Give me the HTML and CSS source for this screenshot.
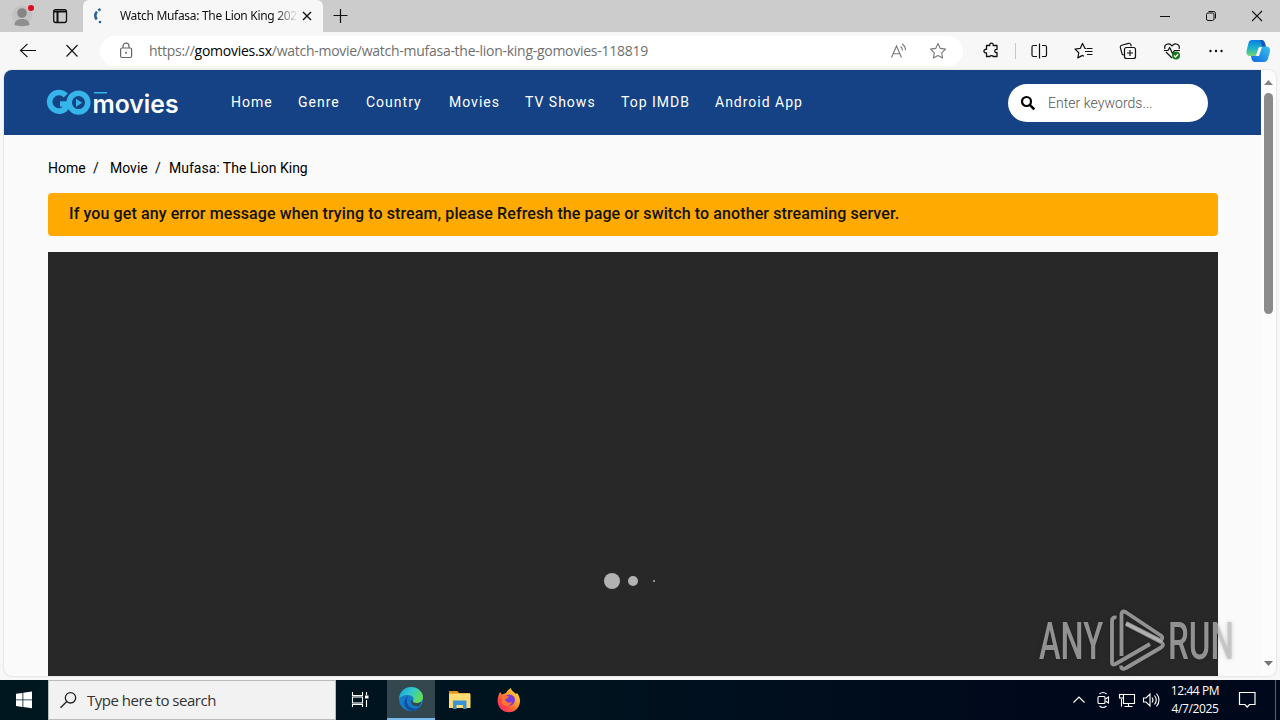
FILE: index.html
```html
<!DOCTYPE html>
<html lang="en">
<head>
<meta charset="utf-8">
<title>Watch Mufasa: The Lion King</title>
<link rel="stylesheet" href="styles.css">
</head>
<body>
<div class="screen">
  <div class="tabstrip">
    <svg class="profile" width="44" height="32" viewBox="0 0 44 32"><circle cx="22" cy="15.500" r="10" fill="#c2c2c2"/><circle cx="22" cy="13" r="4.800" fill="#858585"/><path d="M14.500 25c0-4 3-6 7.500-6s7.500 2 7.500 6c-4 1.500-11 1.500-15 0z" fill="#8f8f8f"/><circle cx="31" cy="8" r="3" fill="#e00b1c"/></svg>
    <svg class="workspaces" width="32" height="32" viewBox="0 0 32 32" fill="none" stroke="#111" stroke-width="1.300"><rect x="9.700" y="9.700" width="12.800" height="12.800" rx="2"/><path d="M9.700 11.500h12.800M13.500 12v10.500" stroke-width="2"/></svg>
    <div class="tab">
      <svg width="16" height="18" viewBox="0 0 16 18" fill="none" stroke="#2a659b"><path d="M8.500 2.200L6.300 3.300M5 4.600C2.700 7 3 10 4.700 12.500" stroke-width="2.600"/><circle cx="8" cy="15" r="1.300" fill="#2a659b" stroke="none"/></svg>
      <span class="tab-title">Watch Mufasa: The Lion King 202</span>
      <svg class="tab-close" width="16" height="16" viewBox="0 0 16 16" stroke="#111" stroke-width="1.400"><path d="M4 4l8 8M12 4l-8 8"/></svg>
    </div>
    <svg width="34" height="32" viewBox="0 0 34 32" stroke="#111" stroke-width="1.200"><path d="M17.500 9v14M10.500 15.500h14"/></svg>
    <div class="window-buttons">
      <svg width="46" height="32" viewBox="0 0 46 32" stroke="#111"><path d="M18 16.500h10"/></svg>
      <svg width="46" height="32" viewBox="0 0 46 32" stroke="#111" fill="none"><rect x="18.500" y="13" width="7.500" height="7.500" rx="1.500"/><path d="M20.500 11.500h5a2 2 0 0 1 2 2v5"/></svg>
      <svg width="46" height="32" viewBox="0 0 46 32" stroke="#111" stroke-width="1.100"><path d="M18 11l10 10M28 11L18 21"/></svg>
    </div>
  </div>

  <div class="toolbar">
    <svg class="tool" viewBox="0 0 44 38" fill="none" stroke="#111" stroke-width="1.100"><path d="M30 18.500H14.500M21.500 11.800l-7 6.700 7 6.700"/></svg>
    <svg class="tool" viewBox="0 0 44 38" stroke="#111" stroke-width="1.100"><path d="M16.500 13l11 11.500M27.500 13l-11 11.500"/></svg>
    <div class="address">
      <svg width="16" height="18" viewBox="0 0 16 18" fill="none" stroke="#666" stroke-width="1.200"><rect x="2.600" y="6" width="11" height="9.500" rx="1.500"/><path d="M5 6V4.200a3 3 0 0 1 6 0V6"/><circle cx="8" cy="10.800" r="1" fill="#666" stroke="none"/></svg>
      <span class="url">https://<b>gomovies.sx</b>/watch-movie/watch-mufasa-the-lion-king-gomovies-118819</span>
      <svg class="read" width="18" height="18" viewBox="0 0 18 18" fill="none" stroke="#777" stroke-width="1.100"><path d="M1.500 15.500L6.500 4l5 11.500M3.200 11.800h6.700M10.500 4.500q2 1.500 2 4M12 1.800q3.500 2.500 3.500 6.500"/></svg>
      <svg width="18" height="18" viewBox="0 0 18 18" fill="none" stroke="#777" stroke-width="1.100" stroke-linejoin="round"><path d="M9 1.600l2.300 4.800 5.200.7-3.800 3.700.9 5.200L9 13.500 4.400 16l.9-5.200L1.500 7.100l5.200-.7z"/></svg>
    </div>
    <svg class="tool extensions" viewBox="0 0 44 38" fill="none" stroke="#111" stroke-width="1.300" stroke-linejoin="round"><path d="M17.500 13.500h3.300c-.6-3.200 4-3.200 3.400 0h3.800v4c-3-.6-3 3.600 0 3v4h-4c.4-1.200-3.400-1.200-3 0h-3.500v-3.600c-3.400.5-3.400-4 0-3.600z"/></svg>
    <span class="divider"></span>
    <svg class="tool" viewBox="0 0 44 38" fill="none" stroke="#111" stroke-width="1.200"><path d="M20 13.500h-3.500a1.500 1.500 0 0 0-1.500 1.500v8a1.500 1.500 0 0 0 1.500 1.500H20M25 13.500h3a1.500 1.500 0 0 1 1.500 1.500v8a1.500 1.500 0 0 1-1.500 1.500h-3M22.500 11.500v15"/></svg>
    <svg class="tool favorites" viewBox="0 0 44 38" fill="none" stroke="#111" stroke-width="1.200" stroke-linejoin="round"><path d="M24.500 16.500l-1.600-.2-2.400-4.800-2.300 4.900-5.200.6 3.800 3.700-1 5.200 4.700-2.500 1.500.9M25 16.500h5.500M23 19.500h7.500M25 22.500h5.500"/></svg>
    <svg class="tool" viewBox="0 0 44 38" fill="none" stroke="#111" stroke-width="1.200"><rect x="18.500" y="15.500" width="11" height="11" rx="2"/><path d="M24 18v6M21 21h6M18 23l-1.700-.4-2-7.200a2 2 0 0 1 1.300-2.200l7-1.900a2 2 0 0 1 2.200 1.400l.5 1.700"/></svg>
    <svg class="tool" viewBox="0 0 44 38" fill="none" stroke="#111" stroke-width="1.200" stroke-linejoin="round"><path d="M15 17c-1.500-4.500 4-7 7-3 3-4 8.500-1.500 7 3M16 20l6 6M14 18.500h4l1.700-3 2.800 6 2-3h5.500"/><circle cx="26" cy="23.500" r="4" fill="#16791b" stroke="none"/><path d="M24 23.500l1.500 1.500 2.700-3" stroke="#fff"/></svg>
    <svg class="tool" viewBox="0 0 44 38" fill="#111"><circle cx="16.500" cy="19" r="1.200"/><circle cx="22" cy="19" r="1.200"/><circle cx="27.500" cy="19" r="1.200"/></svg>
    <svg class="copilot" width="40" height="38" viewBox="0 0 40 38"><defs><linearGradient id="cp1" x1="0" y1="0" x2="0" y2="1"><stop offset="0" stop-color="#087fe3"/><stop offset=".55" stop-color="#20b7c7"/><stop offset="1" stop-color="#77d66e"/></linearGradient><linearGradient id="cp2" x1="1" y1="0" x2="0" y2="1"><stop offset="0" stop-color="#39c4ee"/><stop offset="1" stop-color="#1067df"/></linearGradient></defs><path d="M14 8h9c2 0 3 1.500 3.500 3.500l1 3.500h-4c-2 0-3 1-3.500 3l-1.500 4c-.5 1.500-1.500 2-3 2h-3c-3 0-4.500-2-4-5l2-8c.5-2 1.500-3 3.500-3z" fill="url(#cp1)"/><path d="M26 30h-9c-2 0-3-1.500-3.500-3.500L13 24h3c2 0 3-1 3.500-2.500l1.500-4c.5-1.500 1.500-3 3-3h4c3 0 4.500 2 4 5l-2 7c-.5 2-2 3.500-4 3.500z" fill="url(#cp2)"/><path d="M22 8h2c1.500 0 2.500 1.500 3 3l1 3.500h-4z" fill="#1659b8"/><path d="M21 15h3l-3 9h-3z" fill="#f7f7f7"/></svg>
  </div>

  <div class="page">
    <div class="content">
      <header class="site-header">
        <svg class="logo" width="140" height="32" viewBox="0 0 140 32"><g fill="none" stroke="#35b5e9" stroke-width="5.600"><path d="M17.800 7.500A9.300 9.300 0 1 0 19 18.500V16h-7"/><circle cx="30.500" cy="14.600" r="9.300"/></g><path d="M28 10.700v8l6.200-4z" fill="#35b5e9"/><path d="M46 4.700h13" stroke="#35b5e9" stroke-width="1.600"/><text class="logo-text" x="44.500" y="25.300" textLength="86" lengthAdjust="spacingAndGlyphs">movies</text></svg>
        <nav class="nav"><a>Home</a><a>Genre</a><a>Country</a><a>Movies</a><a>TV Shows</a><a>Top IMDB</a><a>Android App</a></nav>
        <div class="search">
          <svg width="16" height="16" viewBox="0 0 16 16" fill="none" stroke="#000" stroke-width="2.200"><circle cx="6.500" cy="6.500" r="4.500"/><path d="M9.800 9.800l4.500 4.500" stroke-width="2.600"/></svg>
          <span>Enter keywords...</span>
        </div>
      </header>
      <div class="crumbs"><span class="c1">Home</span><span class="c2">/</span><span class="c3">Movie</span><span class="c4">/</span><span class="c5">Mufasa: The Lion King</span></div>
      <div class="alert">If you get any error message when trying to stream, please Refresh the page or switch to another streaming server.</div>
      <div class="player"><svg width="60" height="20" viewBox="0 0 60 20" fill="#b2b2b2"><circle cx="10" cy="10" r="8"/><circle cx="31" cy="10" r="5"/><circle cx="52" cy="10" r="1"/></svg></div>
    </div>
    <div class="scrollbar">
      <svg width="15" height="23" viewBox="0 0 15 23"><path d="M3 15l4.500-5 4.500 5z" fill="#858585"/></svg>
      <span class="thumb"></span>
      <svg class="down" width="15" height="23" viewBox="0 0 15 23"><path d="M3 8l4.500 5L12 8z" fill="#757575"/></svg>
    </div>
  </div>

  <div class="taskbar">
    <svg width="48" height="40" viewBox="0 0 48 40" fill="#fff"><path d="M16 13.800l6.500-.9v6.600H16zM23.300 12.800l8.700-1.200v7.900h-8.700zM16 20.300h6.500v6.600l-6.500-.9zM23.300 20.300H32v7.900l-8.700-1.200z"/></svg>
    <div class="task-search">
      <svg width="18" height="18" viewBox="0 0 18 18" fill="none" stroke="#222" stroke-width="1.300"><circle cx="10.500" cy="6.800" r="5.200"/><path d="M6.800 10.500L.5 16.800"/></svg>
      <span>Type here to search</span>
    </div>
    <svg width="51" height="40" viewBox="0 0 51 40" fill="none" stroke="#fff" stroke-width="1.100"><path d="M16.500 12v3.500h10V12M16.500 27v-2.500h10V27M30.500 12v3M30.500 20v7"/><rect x="16.500" y="17" width="10" height="6"/><path d="M29 15.500h3.500v3H29z" fill="#fff" stroke="none"/></svg>
    <div class="task-edge">
      <svg width="26" height="26" viewBox="0 0 26 26"><defs><linearGradient id="eg" x1="0" y1="0" x2="1" y2=".5"><stop offset="0" stop-color="#159fd5"/><stop offset=".5" stop-color="#31c6cf"/><stop offset="1" stop-color="#64dc58"/></linearGradient></defs><circle cx="13" cy="13" r="12" fill="#147bcb"/><path d="M1 13C2 5 7 1 13 1c7 0 12 5 12 10 0 4-3 6-6.500 6-3 0-4-1-3.500-2 2-3-1-6-5-6-5 0-8 2-9 4z" fill="url(#eg)"/><path d="M9 13c-1.500 6 4 10 9 9.500 2-.2 3.500-1 4.500-2C20 24.500 15 26 11 24 6 22 4 14 10 10z" fill="#124f9a"/><path d="M15 15c-.5 1 .5 2 3.500 2 2 0 3.500-.5 4.700-1.500-.2 2-1.200 3.500-2.200 4.500-5 1-9-2-8-6z" fill="#34474f"/></svg>
    </div>
    <svg class="explorer" width="49" height="40" viewBox="0 0 49 40"><path d="M14 11h8l2 2h11v14H14z" fill="#f0b43a"/><path d="M14 14h21.500v14H14z" fill="#ffdc73"/><path d="M14 11h8l1.500 2H14z" fill="#dd961e"/><path d="M18 20.500h13.500V29H28v-4h-6.500v4H18z" fill="#3b92d5"/></svg>
    <svg width="49" height="40" viewBox="0 0 49 40"><defs><linearGradient id="fx" x1="1" y1="0" x2="0" y2="1"><stop offset="0" stop-color="#fff04a"/><stop offset=".4" stop-color="#ff9b29"/><stop offset=".7" stop-color="#ff493f"/><stop offset="1" stop-color="#e5208c"/></linearGradient></defs><path d="M16 12l2 2.500 4-1.500c1-2 3-4 5-5 0 3 3 3.500 5 6l1-1c2.500 3 3 6 3 8a11.200 11.200 0 0 1-22.400 0c0-4 1-6 2.400-9z" fill="url(#fx)"/><circle cx="25.500" cy="20" r="5.500" fill="#793cdb"/><path d="M18 16c3-1 4 0 7 .5-1 2-3 2-4 3 1 3 4 4 7 2.500-1 4-7 5-10 1.500z" fill="#ff7634"/></svg>
    <div class="tray">
      <svg width="26" height="40" viewBox="0 0 26 40" fill="none" stroke="#fff" stroke-width="1.200"><path d="M8.500 22.500L14 17l5.500 5.500"/></svg>
      <svg width="24" height="40" viewBox="0 0 24 40" fill="none" stroke="#fff" stroke-width="1.100"><rect x="7" y="16.500" width="7" height="7" rx="1"/><path d="M14.500 19l3-2v6l-3-2M8.500 14q3.500-3 7 0M8.500 26q3.500 3 7 0"/></svg>
      <svg width="24" height="40" viewBox="0 0 24 40" fill="none" stroke="#fff" stroke-width="1.100"><path d="M9 14.500h10.500v9H8.500V18M13.500 23.500v3M9.500 26.500h8M6.500 19v7.500"/><rect x="4.500" y="14.500" width="4" height="3.500"/></svg>
      <svg width="26" height="40" viewBox="0 0 26 40" fill="none" stroke="#fff" stroke-width="1.100"><path d="M4.500 18h2.500l4-4v12l-4-4H4.500zM13 17.500q2 2.500 0 5M15.500 15.500q3.500 4.500 0 9M17.500 13.500q5 6.500 0 13"/></svg>
      <div class="clock"><span>12:44 PM</span><span class="date">4/7/2025</span></div>
      <svg class="notice" width="49" height="40" viewBox="0 0 49 40" fill="none" stroke="#fff" stroke-width="1.200"><path d="M16.500 12.500h15.500v12h-5.500l-2.300 2.500-2.300-2.500h-5.400z"/></svg>
      <span class="peek"></span>
    </div>
  </div>

  <svg class="watermark" width="216" height="72" viewBox="0 0 216 72">
    <g class="mark-text"><text x="4" y="51" textLength="64" lengthAdjust="spacingAndGlyphs">ANY</text><text x="133" y="51" textLength="66" lengthAdjust="spacingAndGlyphs">RUN</text></g>
    <g fill="none" stroke="#bdbdbd" stroke-opacity=".72" stroke-width="3.800" stroke-linejoin="round"><path d="M81.500 9.500q-4.500-1-4.500 4v41q0 3 3.500 1.500L115 36"/><path d="M86.500 48V5.500q1-3 4-1.500l36 24q2 2-1 4.500L91 15"/><path d="M86 57.500q0 5 5 2.500l35-20.500q4-3 0-5.500L91 16"/></g>
  </svg>
</div>
</body>
</html>
```
FILE: styles.css
```css
* { box-sizing: border-box; }
body { margin: 0; overflow: hidden; font-family: "Open Sans", "Noto Sans", sans-serif; }
svg { display: block; flex: none; }
.screen { position: relative; display: flex; flex-direction: column; width: 1280px; height: 720px; background: #f7f7f7; }

.tabstrip { display: flex; height: 32px; background: #ccc; }
.workspaces { margin-right: 7px; }
.tab { display: flex; align-items: center; width: 240px; height: 32px; padding-left: 9px; background: #f7f7f7; border-radius: 6px 6px 0 0; }
.tab-title { width: 178px; margin-left: 12px; padding-bottom: 1px; white-space: nowrap; font: 12px "Noto Sans", sans-serif; letter-spacing: -0.31px; color: #111; -webkit-mask-image: linear-gradient(90deg, #000 155px, transparent 178px); mask-image: linear-gradient(90deg, #000 155px, transparent 178px); }
.tab-close { margin-left: 1px; }
.window-buttons { display: flex; margin-left: auto; }

.toolbar { display: flex; align-items: center; height: 38px; padding-left: 6px; background: #f7f7f7; }
.tool { width: 44px; height: 38px; }
.address { display: flex; align-items: center; width: 863px; height: 30px; margin: 0 6px; padding: 0 16px 0 18px; border-radius: 15px; background: #fff; }
.url { margin-left: 15px; padding-bottom: 1px; font-size: 14px; letter-spacing: -0.27px; white-space: nowrap; color: #707070; }
.url b { font-weight: 400; color: #000; }
.read { margin: 0 21px 0 auto; }
.divider { width: 1px; height: 16px; margin: 0 1px 0 2px; background: #c8c8c8; }
.favorites { margin-left: 1px; }

.page { display: flex; width: 1272px; height: 606px; margin-left: 4px; border-radius: 8px; overflow: hidden; background: #fafafa; box-shadow: 0 0 2px #c5c5c5; }
.content { width: 1257px; font-family: Roboto, sans-serif; }
.site-header { display: flex; height: 65px; padding-left: 44px; background: #154284; }
.logo { margin-top: 18px; overflow: visible; }
.logo-text { font: 600 25px Inter, sans-serif; fill: #fff; }
.nav { display: flex; width: 777px; margin-left: 43px; font-size: 14px; line-height: 64px; letter-spacing: 1px; color: #fff; }
.nav a { white-space: nowrap; width: 67px; }
.nav a:nth-child(2) { width: 68px; }
.nav a:nth-child(3) { width: 83px; }
.nav a:nth-child(4) { width: 76px; }
.nav a:nth-child(5) { width: 96px; }
.nav a:nth-child(6) { width: 94px; }
.search { display: flex; align-items: center; gap: 12px; width: 200px; height: 38px; margin-top: 14px; padding-left: 12px; border-radius: 19px; background: #fff; font-size: 14px; font-weight: 300; letter-spacing: 0.04px; color: #555; }
.crumbs { display: flex; padding: 24px 44px 0; font-size: 14px; line-height: 18px; color: #000; }
.c1 { width: 45px; }
.c2 { width: 17px; }
.c3 { width: 45px; }
.c4 { width: 14px; }
.c5 { white-space: nowrap; }
.alert { width: 1170px; height: 43px; margin: 16px 0 16px 44px; padding-left: 21px; border-radius: 4px; background: #fa0; font-size: 16px; font-weight: 500; line-height: 41px; letter-spacing: 0.104px; color: #111; }
.player { width: 1170px; height: 424px; margin-left: 44px; padding: 319px 0 0 554px; background: #282828; }
.scrollbar { display: flex; flex-direction: column; width: 15px; background: #fcfcfc; }
.thumb { width: 9px; height: 221px; margin-left: 3px; border-radius: 5px; background: #8b8b8b; }
.down { margin-top: auto; }

.taskbar { display: flex; height: 40px; margin-top: 4px; background: linear-gradient(90deg, #00171f, #00131f 45%, #00081b 85%); }
.task-search { display: flex; align-items: center; width: 288px; padding-left: 11px; border: 1px solid #bbb; background: #f2f2f2; font-size: 15px; color: #333; }
.task-search span { margin-left: 9px; letter-spacing: -0.48px; }
.task-edge { display: flex; align-items: center; justify-content: center; width: 48px; border-bottom: 2px solid #76b9ed; background: #34474f; }
.tray { display: flex; margin-left: auto; color: #fff; }
.clock { display: flex; flex-direction: column; align-items: center; width: 60px; padding-top: 2px; font: 12px/18px "Open Sans", sans-serif; letter-spacing: -0.4px; white-space: nowrap; }
.notice { margin: 0 3px 0 -2px; }
.peek { width: 5px; border-left: 1px solid #596071; }

.watermark { position: absolute; left: 1035px; top: 608px; overflow: visible; filter: drop-shadow(0 0 2px rgba(0, 0, 0, .25)); }
.mark-text { font: 500 52px Roboto, sans-serif; fill: #bdbdbd; fill-opacity: .72; }
```
